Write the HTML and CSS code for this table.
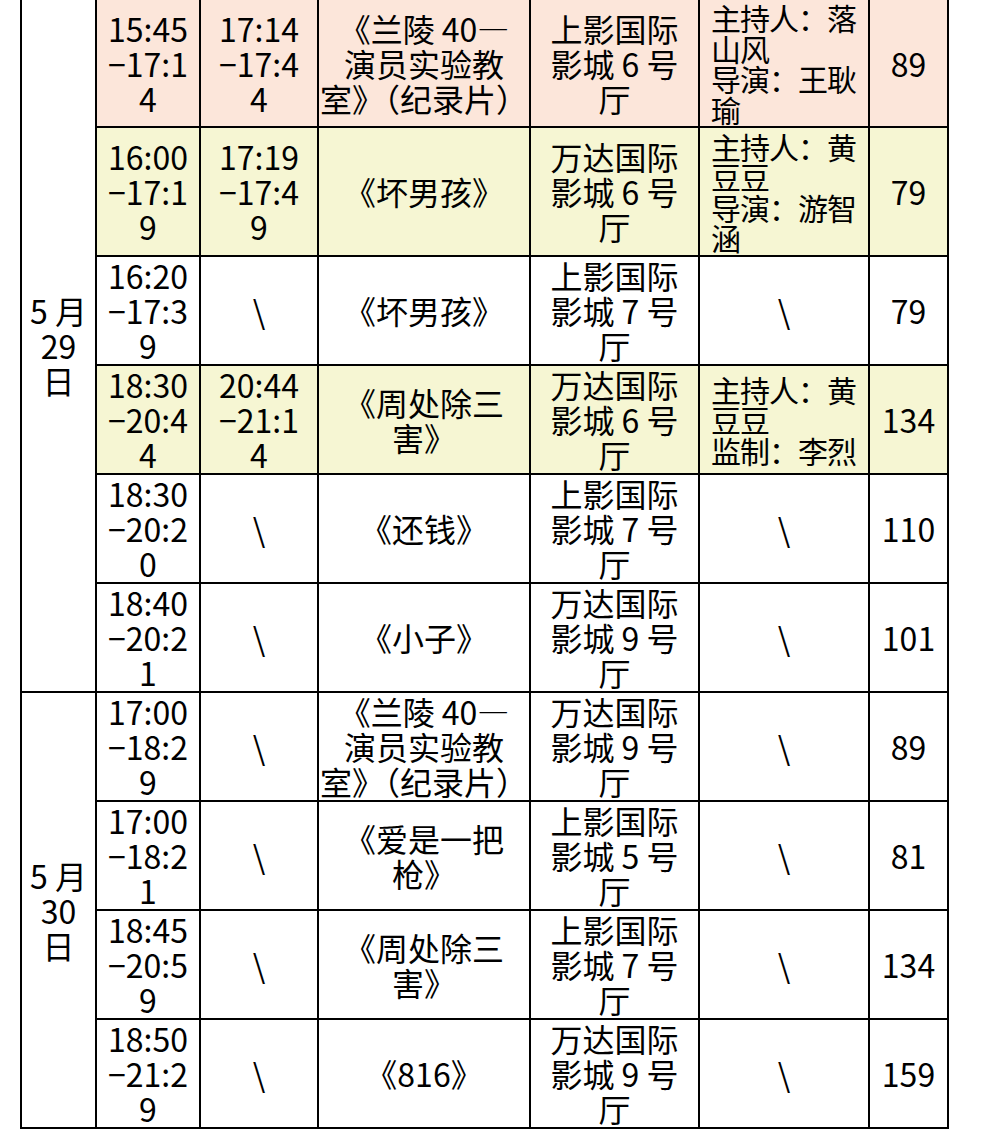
FILE: index.html
```html
<!DOCTYPE html>
<html lang="zh-CN">
<head>
<meta charset="utf-8">
<title>放映排片表</title>
<link rel="stylesheet" href="styles.css">
</head>
<body>
<table class="sched">
  <colgroup>
    <col class="c-date">
    <col class="c-time">
    <col class="c-time2">
    <col class="c-film">
    <col class="c-venue">
    <col class="c-guest">
    <col class="c-len">
  </colgroup>
  <tbody>
    <tr class="r-first peach">
      <td class="date" rowspan="6">5 月<br>29<br>日</td>
      <td>15:45<br>−17:1<br>4</td>
      <td>17:14<br>−17:4<br>4</td>
      <td>《兰陵 40—<br>演员实验教<br>室》（纪录片）</td>
      <td>上影国际<br>影城 6 号<br>厅</td>
      <td class="guest">主持人：落<br>山风<br>导演：王耿<br>瑜</td>
      <td>89</td>
    </tr>
    <tr class="r-tall yellow">
      <td>16:00<br>−17:1<br>9</td>
      <td>17:19<br>−17:4<br>9</td>
      <td>《坏男孩》</td>
      <td>万达国际<br>影城 6 号<br>厅</td>
      <td class="guest">主持人：黄<br>豆豆<br>导演：游智<br>涵</td>
      <td>79</td>
    </tr>
    <tr class="r">
      <td>16:20<br>−17:3<br>9</td>
      <td>\</td>
      <td>《坏男孩》</td>
      <td>上影国际<br>影城 7 号<br>厅</td>
      <td>\</td>
      <td>79</td>
    </tr>
    <tr class="r yellow">
      <td>18:30<br>−20:4<br>4</td>
      <td>20:44<br>−21:1<br>4</td>
      <td>《周处除三<br>害》</td>
      <td>万达国际<br>影城 6 号<br>厅</td>
      <td class="guest">主持人：黄<br>豆豆<br>监制：李烈</td>
      <td>134</td>
    </tr>
    <tr class="r">
      <td>18:30<br>−20:2<br>0</td>
      <td>\</td>
      <td>《还钱》</td>
      <td>上影国际<br>影城 7 号<br>厅</td>
      <td>\</td>
      <td>110</td>
    </tr>
    <tr class="r">
      <td>18:40<br>−20:2<br>1</td>
      <td>\</td>
      <td>《小子》</td>
      <td>万达国际<br>影城 9 号<br>厅</td>
      <td>\</td>
      <td>101</td>
    </tr>
    <tr class="r">
      <td class="date" rowspan="4">5 月<br>30<br>日</td>
      <td>17:00<br>−18:2<br>9</td>
      <td>\</td>
      <td>《兰陵 40—<br>演员实验教<br>室》（纪录片）</td>
      <td>万达国际<br>影城 9 号<br>厅</td>
      <td>\</td>
      <td>89</td>
    </tr>
    <tr class="r">
      <td>17:00<br>−18:2<br>1</td>
      <td>\</td>
      <td>《爱是一把<br>枪》</td>
      <td>上影国际<br>影城 5 号<br>厅</td>
      <td>\</td>
      <td>81</td>
    </tr>
    <tr class="r">
      <td>18:45<br>−20:5<br>9</td>
      <td>\</td>
      <td>《周处除三<br>害》</td>
      <td>上影国际<br>影城 7 号<br>厅</td>
      <td>\</td>
      <td>134</td>
    </tr>
    <tr class="r">
      <td>18:50<br>−21:2<br>9</td>
      <td>\</td>
      <td>《816》</td>
      <td>万达国际<br>影城 9 号<br>厅</td>
      <td>\</td>
      <td>159</td>
    </tr>
  </tbody>
</table>
</body>
</html>
```

FILE: styles.css
```css
html, body {
  margin: 0;
  padding: 0;
  background: #ffffff;
}

body {
  font-family: "Noto Sans CJK SC", "Noto Sans", sans-serif;
  color: #000000;
  overflow: hidden;
}

.sched {
  margin-left: 20px;
  border-collapse: collapse;
  table-layout: fixed;
  width: 929px;
}

.c-date { width: 75px; }
.c-time { width: 104px; }
.c-time2 { width: 118px; }
.c-film { width: 212px; }
.c-venue { width: 169px; }
.c-guest { width: 170px; }
.c-len { width: 79px; }

.sched td {
  border: 2px solid #000000;
  padding: 0;
  font-size: 32px;
  line-height: 35px;
  text-align: center;
  vertical-align: middle;
  white-space: nowrap;
}

.sched tr.r-first td {
  border-top: none;
}

.sched tr.r-first { height: 127px; }
.sched tr.r-tall { height: 129px; }
.sched tr.r { height: 109px; }

.sched tr.peach td { background: #fce6da; }
.sched tr.yellow td { background: #f6f6d3; }
.sched td.date { background: #ffffff !important; }

.sched td.guest {
  text-align: left;
  padding-left: 11px;
  font-size: 30px;
  letter-spacing: -1px;
  line-height: 30.5px;
}
```
